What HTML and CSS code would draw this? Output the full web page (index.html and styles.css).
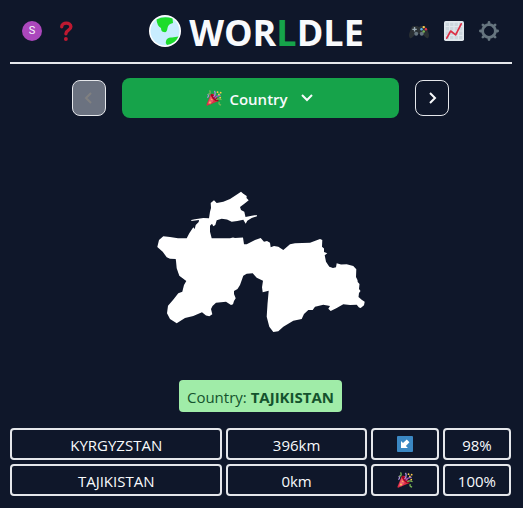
FILE: index.html
```html
<!DOCTYPE html>
<html lang="en">
<head>
<meta charset="utf-8">
<meta name="viewport" content="width=device-width, initial-scale=1">
<title>Worldle</title>
<link rel="stylesheet" href="styles.css">
</head>
<body>
<svg class="defs" aria-hidden="true">
  <symbol id="party" viewBox="0 0 36 36">
    <path fill="#DD2E44" d="M11 9 1 33Q1 36 4 35L28 25Q26 15 20 11Q15 7 11 9Z"/>
    <path fill="#EA596E" d="M11 13 4 31 10 32 17 24Z"/>
    <path fill="#A0041E" d="M11 9Q10 13 15 19Q22 27 28 25Q29 23 24 17Q17 9 11 9Z"/>
    <path fill="none" stroke="#AA8DD8" stroke-width="3" d="M17 16Q23 9 19 2M3 17Q8 14 4 9"/>
    <path fill="none" stroke="#77B255" stroke-width="3" d="M5 10Q12 8 8 1M23 22Q28 18 35 22M30 27Q27 32 34 34"/>
    <path fill="none" stroke="#9266CC" stroke-width="3" d="M20 19Q23 12 33 12"/>
    <g fill="#FFCC4D"><circle cx="26" cy="5" r="2"/><circle cx="33" cy="6" r="2"/><circle cx="29" cy="10" r="2"/><circle cx="32" cy="17" r="2"/><circle cx="9" cy="28" r="2"/><circle cx="13" cy="21" r="1.500"/></g>
  </symbol>
</svg>
<div class="page">
  <header class="header">
    <nav class="tools tools-left" aria-label="Account and help">
      <button class="avatar" type="button" aria-label="Account">S</button>
      <button class="icon-button" type="button" aria-label="How to play">
        <svg class="icon" viewBox="0 0 36 36"><path fill="none" stroke="#BE1931" stroke-width="6" stroke-linecap="round" stroke-linejoin="round" d="M8.500 10.500C8.500 1.500 25 1.500 25 10.500C25 17 16 16 16 23"/><circle cx="16" cy="32.500" r="3.500" fill="#BE1931"/></svg>
      </button>
    </nav>
    <h1 class="title">
      <svg class="globe" viewBox="0 0 32 32" aria-hidden="true"><circle cx="16" cy="16" r="16" fill="#fff"/><circle cx="16" cy="16" r="14.500" fill="#c8edff"/><path fill="#1ddc2c" d="M7.500 4.500Q15 .500 23.500 3.500L24 8Q19 9 18.500 13Q18 18 15 17Q12 17 12 13Q8 11 7.500 4.500ZM17 26Q18 22 23 22.500L29.500 21.500Q26 29 18 30Q16 28 17 26Z"/></svg>
      <span class="wordmark">WOR<span class="accent">L</span>DLE</span>
    </h1>
    <nav class="tools tools-right" aria-label="Games, stats and settings">
      <button class="icon-button" type="button" aria-label="Other games">
        <svg class="icon" viewBox="0 0 36 36"><path fill="#292F33" d="M7 9H15L18 11 21 9H29Q32 11 34 18Q38 28 34 31Q31 32 25 24H11Q5 32 2 31Q-2 28 2 18Q4 11 7 9Z"/><path fill="none" stroke="#9AAAB4" stroke-width="2.500" d="M10 11v8M6 15h8"/><g fill="#66757F"><circle cx="13" cy="23" r="3.500"/><circle cx="23" cy="23" r="3.500"/></g><circle cx="26.500" cy="11" r="2.200" fill="#FFCC4D"/><circle cx="22.500" cy="15" r="2.200" fill="#55ACEE"/><circle cx="30.500" cy="15" r="2.200" fill="#DD2E44"/><circle cx="26.500" cy="19" r="2.200" fill="#77B255"/></svg>
      </button>
      <button class="icon-button" type="button" aria-label="Statistics">
        <svg class="icon" viewBox="0 0 36 36"><rect width="36" height="36" rx="3" fill="#E1E8ED"/><path fill="#CCD6DD" d="M3 3h6v6H3zM11 3h6v6h-6zM19 3h6v6h-6zM27 3h6v6h-6zM3 11h6v6H3zM11 11h6v6h-6zM19 11h6v6h-6zM27 11h6v6h-6zM3 19h6v6H3zM11 19h6v6h-6zM19 19h6v6h-6zM27 19h6v6h-6zM3 27h6v6H3zM11 27h6v6h-6zM19 27h6v6h-6zM27 27h6v6h-6z"/><path fill="none" stroke="#DD2E44" stroke-width="3" stroke-linecap="round" stroke-linejoin="round" d="M5 31 12 18 21 25 31 5"/></svg>
      </button>
      <button class="icon-button" type="button" aria-label="Settings">
        <svg class="icon" viewBox="0 0 36 36"><circle cx="18" cy="18" r="11.500" fill="none" stroke="#66757F" stroke-width="5"/><path stroke="#66757F" stroke-width="5" stroke-linecap="round" d="M18 2.500v4M18 29.500v4M2.500 18h4M29.500 18h4M7 7l3 3M26 26l3 3M29 7l-3 3M10 26l-3 3"/></svg>
      </button>
    </nav>
  </header>

  <main class="game">
    <nav class="rounds" aria-label="Rounds">
      <button class="step" type="button" aria-label="Previous round" disabled>
        <svg class="chevron" viewBox="0 0 16 16"><path d="M10 3 5 8l5 5"/></svg>
      </button>
      <button class="round" type="button" aria-haspopup="true">
        <svg class="emoji" aria-hidden="true"><use href="#party"/></svg>
        <span class="round-name">Country</span>
        <svg class="chevron chevron-down" viewBox="0 0 16 16"><path d="m3 5 5 5 5-5"/></svg>
      </button>
      <button class="step" type="button" aria-label="Next round">
        <svg class="chevron" viewBox="0 0 16 16"><path d="m6 3 5 5-5 5"/></svg>
      </button>
    </nav>

    <figure class="shape">
      <svg class="country" viewBox="150 180 221 160" role="img" aria-label="Country outline">
        <path d="M157.300 247 159 240 163.300 236.300 170 237 178 238.300 186.700 238.300 189.300 233.300 193.300 227.300 194.700 229 195.700 225 198.700 222 199 220 191.300 221 191.300 220 195 219.300 203.300 218 209 218.300 210 211.700 211 208 210.700 203 214 200.300 216.700 203 223.300 201.700 230 199 237.300 194.300 241 191.700 243.300 193.700 246.700 196 246.500 198 248.700 200.300 245 203.300 240 207 241 210 244.300 211.700 245.500 217 251.700 215.700 256.700 215 257 216.300 251.700 218 247.300 220.700 245.700 223.700 243.300 219.700 237.300 221 231.700 221.700 227 219.500 221.700 218.700 216.700 220.300 215.300 225 213.300 226.300 212 223.700 210 225.700 210 231.700 211.700 238.300 230 238.300 233 237.500 235 238 243 237.500 244 244.300 246.700 244.300 255 240 260.700 238 264 241.700 267 241 270 242.700 270.700 247.300 274 246 278.300 246.700 283.300 250 290 244.300 295 243.300 310 242.700 320 239 322.300 240 322 246.700 324 248.500 324 252 327.300 253.300 324.700 255.300 326 261.700 329.300 266.700 333 268 336 267.300 336.700 263.300 341 264.600 346.700 264.300 353.300 266 356.300 269.300 356 277 357.500 280 357.700 282 359.500 284 359 289 360.500 291 359 293 358.500 297 362 300 364.700 301.700 364 305.300 360.700 308 359 307.500 356.700 304.700 350 305 343.300 304.300 336.700 308 330.700 311 328.300 308.700 330 306 323.300 304.700 315 306.700 312.700 310 308.300 310 304 314 301.700 319 293.300 320.700 283.300 326.700 278.300 331.300 273.300 332 269.300 326.700 266.700 316.700 267.500 304 268.700 290.700 262.700 292.300 262 287.300 263 280.700 256.700 277.700 252.700 273.300 246.700 273.700 243.300 275.700 240 285 237.500 289 234 291 234 294 235.700 298.300 234 301 233 304.300 231 305 226 301.700 216 302.700 212.500 306 211 309 212.300 314.300 209.300 316.300 206 315.500 202 312.300 193.300 316 185 318 176.700 323.300 170 319 167 313.300 168 305.700 173 300 178.300 293.300 182.300 291.700 184 285 186.300 281 179.300 275.700 176.700 268.300 176 261 175.700 259 170 258.700 166.700 257.300 162.700 251.700Z"/>
      </svg>
    </figure>

    <p class="answer">Country: <strong>TAJIKISTAN</strong></p>

    <table class="guesses" aria-label="Guesses">
      <tbody>
        <tr>
          <td class="name">KYRGYZSTAN</td>
          <td class="distance">396km</td>
          <td class="direction"><svg class="emoji" viewBox="0 0 36 36" role="img" aria-label="South-west"><rect width="36" height="36" rx="2" fill="#3B88C3"/><path fill="#fff" d="M9 11.500V27H24.500L20 22.500 28 14 22 8 13.500 16Z"/></svg></td>
          <td>98%</td>
        </tr>
        <tr>
          <td class="name">TAJIKISTAN</td>
          <td class="distance">0km</td>
          <td class="direction"><svg class="emoji" role="img" aria-label="Correct"><use href="#party"/></svg></td>
          <td>100%</td>
        </tr>
      </tbody>
    </table>
  </main>
</div>
</body>
</html>
```
FILE: styles.css
```css
* {
  box-sizing: border-box;
}

body {
  margin: 0;
  background: #0f172a;
  color: #f8fafc;
  font: 15px/24px "Open Sans", "Noto Sans", sans-serif;
}

button {
  padding: 0;
  border: 0;
  background: none;
  color: inherit;
  font: inherit;
  cursor: pointer;
}

svg {
  display: block;
  flex: none;
}

.defs {
  position: absolute;
  width: 0;
  height: 0;
}

.page {
  padding: 0 11px 0 10px;
}

.header {
  display: grid;
  grid-template-columns: 1fr auto 1fr;
  align-items: center;
  height: 64px;
  padding: 0 13px 0 12px;
  border-bottom: 2px solid #e5e7eb;
}

.tools {
  display: flex;
  align-items: center;
  gap: 15px;
}

.tools-right {
  justify-content: flex-end;
}

.avatar {
  width: 20px;
  height: 20px;
  border-radius: 50%;
  background: #ab47bc;
  font: 11px/20px Roboto, sans-serif;
}

.icon {
  width: 20px;
  height: 20px;
}

.title {
  display: flex;
  align-items: center;
  gap: 8px;
  margin: 0;
  padding-right: 8px;
  font-size: 36px;
  line-height: 40px;
  font-weight: 700;
}

.wordmark {
  padding-top: 4px;
}

.globe {
  width: 32px;
  height: 32px;
}

.accent {
  color: #16a34a;
}

.game {
  padding-right: 1px;
}

.rounds {
  display: flex;
  align-items: center;
  gap: 16px;
  padding: 14px 62px 0;
}

.step {
  display: flex;
  align-items: center;
  justify-content: center;
  width: 34px;
  height: 36px;
  border: 1px solid #e5e7eb;
  border-radius: 8px;
}

.step:disabled {
  background: #6b7280;
  color: #808080;
  cursor: default;
}

.round {
  display: flex;
  flex: 1;
  align-items: center;
  justify-content: center;
  gap: 7px;
  height: 40px;
  border-radius: 8px;
  background: #16a34a;
  font-weight: 600;
}

.round-name {
  padding-top: 2px;
}

.chevron {
  width: 16px;
  height: 16px;
  fill: none;
  stroke: currentColor;
  stroke-width: 2;
}

.chevron-down {
  margin-left: 4px;
}

.shape {
  display: flex;
  justify-content: center;
  margin: 0;
  padding: 62px 0 40px;
}

.country {
  width: 221px;
  height: 160px;
  fill: #fff;
}

.answer {
  width: fit-content;
  margin: 0 auto 16px;
  padding: 5px 8px 3px;
  border-radius: 4px;
  background: #a0eca8;
  color: #14532d;
}

.answer strong {
  font-weight: 700;
}

.guesses,
.guesses tbody {
  display: grid;
  gap: 4px;
}

.guesses tr {
  display: grid;
  grid-template-columns: repeat(7, 1fr);
  gap: 4px;
}

.guesses td {
  display: flex;
  align-items: center;
  justify-content: center;
  height: 32px;
  padding: 2px 0 0;
  border: 2px solid #e5e7eb;
  border-radius: 4px;
}

.guesses .name {
  grid-column: span 3;
}

.guesses .distance {
  grid-column: span 2;
}

.guesses .direction {
  padding: 0;
}

.emoji {
  width: 16px;
  height: 16px;
}
```
